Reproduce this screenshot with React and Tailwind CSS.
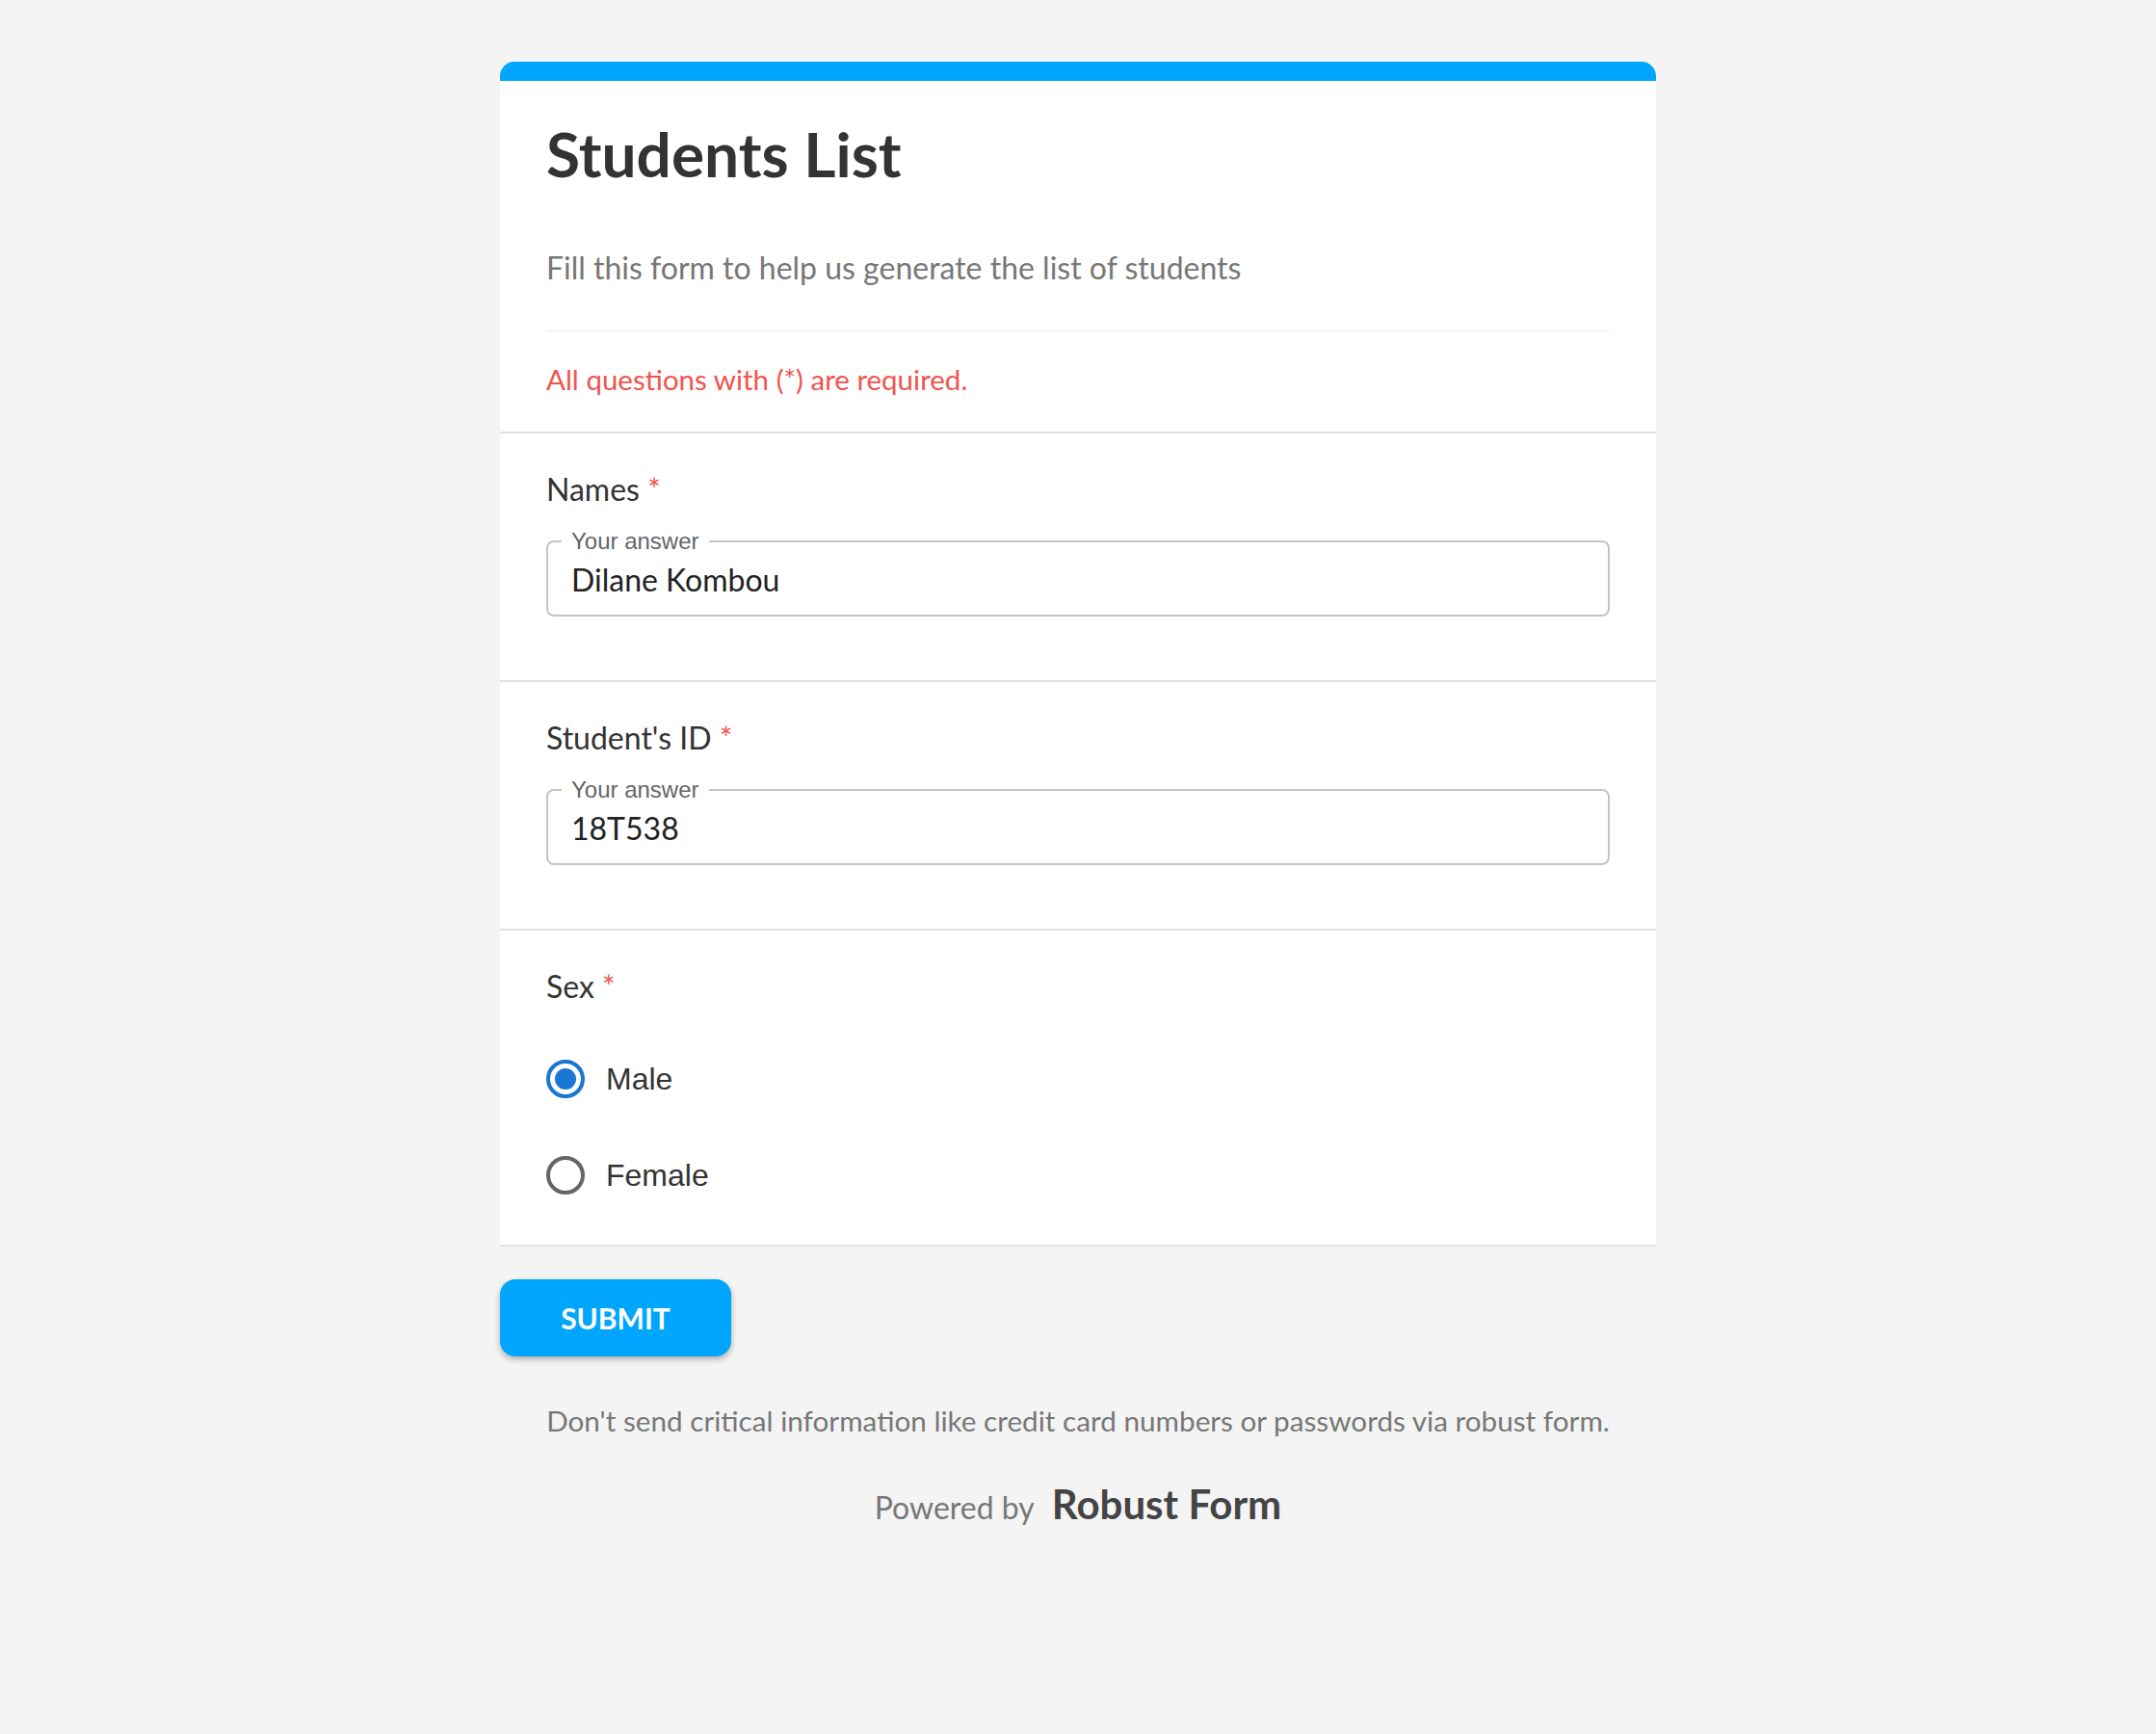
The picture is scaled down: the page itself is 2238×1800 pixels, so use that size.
import React, { useState } from 'react';

const sans = "font-['Lato','Noto_Sans',sans-serif]";
const arial = "font-['Liberation_Sans','Arial',sans-serif]";

const TextQuestion = ({ label, value }) => (
  <div className="border-b-2 border-[#e0e0e0] px-12 pt-[38px] pb-[66px]">
    <div className="text-[32px] leading-[40px] text-[#333]">
      {label} <span className="text-[#f0544f]">*</span>
    </div>
    <fieldset className="mt-[24px] h-[88px] border-2 border-[#c4c4c4] rounded-[8px] px-[24px]">
      <legend className={`${arial} ml-[-10px] px-[10px] text-[24px] leading-[20px] text-[#666]`}>
        Your answer
      </legend>
      <div className="text-[32px] leading-[40px] text-[#222] mt-[10px]">{value}</div>
    </fieldset>
  </div>
);

const Radio = ({ checked, label, onClick }) => (
  <button onClick={onClick} className="flex items-center h-[40px] cursor-pointer">
    <span
      className={`w-[40px] h-[40px] rounded-full border-4 flex items-center justify-center ${
        checked ? 'border-[#1976d2]' : 'border-[#666]'
      }`}
    >
      {checked && <span className="w-[22px] h-[22px] rounded-full bg-[#1976d2]" />}
    </span>
    <span className={`${arial} ml-[22px] text-[32px] text-[#333]`}>{label}</span>
  </button>
);

export default function App() {
  const [sex, setSex] = useState('male');

  return (
    <div className={`${sans} min-h-screen bg-[#f4f4f4] pt-[64px] pb-[100px]`}>
      <div className="w-[1200px] mx-auto">
        <div className="bg-white rounded-t-[15px] overflow-hidden">
          <div className="h-[20px] bg-[#00a6fe]" />

          <div className="border-b-2 border-[#e0e0e0] px-12">
            <h1 className="pt-[40px] text-[64px] leading-[72px] font-bold text-[#333]">Students List</h1>
            <p className="mt-[62px] text-[32px] leading-[40px] text-[#777]">
              Fill this form to help us generate the list of students
            </p>
            <div className="mt-[45px] h-px bg-[#eaeaea]" />
            <p className="pt-[32px] pb-[36px] text-[29.5px] leading-[36px] text-[#f0544f]">
              All questions with (*) are required.
            </p>
          </div>

          <TextQuestion label="Names" value="Dilane Kombou" />
          <TextQuestion label="Student's ID" value="18T538" />

          <div className="border-b-2 border-[#e0e0e0] px-12 pt-[38px] pb-[52px]">
            <div className="text-[32px] leading-[40px] text-[#333]">
              Sex <span className="text-[#f0544f]">*</span>
            </div>
            <div className="mt-[56px] flex flex-col gap-[60px]">
              <Radio checked={sex === 'male'} label="Male" onClick={() => setSex('male')} />
              <Radio checked={sex === 'female'} label="Female" onClick={() => setSex('female')} />
            </div>
          </div>
        </div>

        <button className="mt-[34px] w-[240px] h-[80px] rounded-[16px] bg-[#00a6fe] text-white text-[30px] font-bold shadow-[0_3px_6px_rgba(0,0,0,0.3)]">
          SUBMIT
        </button>

        <p className="mt-[49px] text-center whitespace-nowrap text-[29.7px] leading-[36px] text-[#777]">
          Don't send critical information like credit card numbers or passwords via robust form.
        </p>

        <div className="mt-[37px] flex items-baseline justify-center gap-[18px]">
          <span className="text-[32px] text-[#777]">Powered by</span>
          <span className="text-[42px] font-bold text-[#444]">Robust Form</span>
        </div>
      </div>
    </div>
  );
}
